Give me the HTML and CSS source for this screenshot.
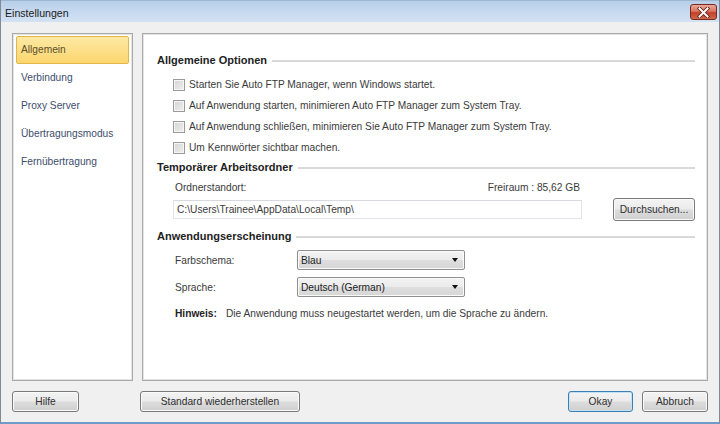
FILE: index.html
```html
<!DOCTYPE html>
<html lang="de">
<head>
<meta charset="utf-8">
<title>Einstellungen</title>
<link rel="stylesheet" href="styles.css">
</head>
<body>
<div class="window">
  <div class="titlebar">
    <span class="title">Einstellungen</span>
    <div class="close">
      <svg width="13" height="11" viewBox="0 0 13 11">
        <path d="M2.5 1.5 L10.5 9.5 M10.5 1.5 L2.5 9.5" stroke="#5a1a10" stroke-width="3.6" stroke-linecap="square" fill="none"/>
        <path d="M2.5 1.5 L10.5 9.5 M10.5 1.5 L2.5 9.5" stroke="#ffffff" stroke-width="2" stroke-linecap="square" fill="none"/>
      </svg>
    </div>
  </div>
  <div class="client">
    <div class="panels">
      <ul class="nav">
        <li class="nav-item selected">Allgemein</li>
        <li class="nav-item">Verbindung</li>
        <li class="nav-item">Proxy Server</li>
        <li class="nav-item">Übertragungsmodus</li>
        <li class="nav-item">Fernübertragung</li>
      </ul>
      <div class="main">
        <div class="group-head"><span>Allgemeine Optionen</span><i class="rule"></i></div>
        <div class="checks">
          <label class="check"><span class="box"></span>Starten Sie Auto FTP Manager, wenn Windows startet.</label>
          <label class="check"><span class="box"></span>Auf Anwendung starten, minimieren Auto FTP Manager zum System Tray.</label>
          <label class="check"><span class="box"></span>Auf Anwendung schließen, minimieren Sie Auto FTP Manager zum System Tray.</label>
          <label class="check"><span class="box"></span>Um Kennwörter sichtbar machen.</label>
        </div>

        <div class="group-head head-temp"><span>Temporärer Arbeitsordner</span><i class="rule"></i></div>
        <div class="folder">
          <div class="folder-labels"><span>Ordnerstandort:</span><span>Freiraum : 85,62 GB</span></div>
          <div class="folder-row">
            <div class="textbox">C:\Users\Trainee\AppData\Local\Temp\</div>
            <div class="btn btn-browse">Durchsuchen...</div>
          </div>
        </div>

        <div class="group-head head-app"><span>Anwendungserscheinung</span><i class="rule"></i></div>
        <div class="form-row first">
          <span class="form-label">Farbschema:</span>
          <div class="select"><span>Blau</span><i class="arrow"></i></div>
        </div>
        <div class="form-row">
          <span class="form-label">Sprache:</span>
          <div class="select"><span>Deutsch (German)</span><i class="arrow"></i></div>
        </div>
        <div class="note"><b>Hinweis:</b><span>Die Anwendung muss neugestartet werden, um die Sprache zu ändern.</span></div>
      </div>
    </div>
    <div class="footer">
      <div class="btn btn-help">Hilfe</div>
      <div class="btn btn-reset">Standard wiederherstellen</div>
      <div class="spacer"></div>
      <div class="btn btn-ok">Okay</div>
      <div class="btn btn-cancel">Abbruch</div>
    </div>
  </div>
</div>
</body>
</html>
```
FILE: styles.css
```css
* { box-sizing: border-box; }
html, body { margin: 0; padding: 0; }
body {
  width: 720px;
  height: 424px;
  overflow: hidden;
  font-family: "Liberation Sans", Arial, sans-serif;
  font-size: 10.2px;
  color: #3a3a3a;
  background: #f0f0f0;
}
.window {
  width: 720px;
  height: 424px;
  display: flex;
  flex-direction: column;
  background: #f0f0f0;
  border-left: 1px solid #7f8a98;
  border-right: 1px solid #7f8a98;
  border-bottom: 2px solid #6f9cc8;
}
.titlebar {
  height: 22px;
  flex: none;
  display: flex;
  align-items: center;
  justify-content: space-between;
  padding: 0 2px 0 4px;
  background: linear-gradient(#b8cfea, #c9dbf0 60%, #d3e2f3);
  border-top: 1px solid #9fb5d0;
}
.title {
  font-size: 10.6px;
  color: #1b1b1b;
  margin-top: 2px;
}
.close {
  width: 27px;
  height: 16px;
  margin-top: 1px;
  border: 1px solid #7a2a1c;
  border-radius: 3px;
  background: linear-gradient(#e8a898, #d9765f 45%, #c2402a 55%, #cf6a4c);
  display: flex;
  align-items: center;
  justify-content: center;
}
.close svg { display: block; }
.client {
  flex: 1;
  display: flex;
  flex-direction: column;
  padding: 11px 11px 0 11px;
}
.panels {
  height: 348px;
  display: flex;
  gap: 9px;
}
.nav {
  width: 121px;
  margin: 0;
  padding: 2px 3px;
  list-style: none;
  background: #fff;
  border: 1px solid #a9a9a9;
  box-shadow: inset 0 0 0 1px #e4e4e4;
}
.nav-item {
  height: 28px;
  line-height: 26px;
  padding-left: 4px;
  border: 1px solid transparent;
  color: #3d4d6d;
}
.nav-item.selected {
  background: linear-gradient(#fde9a3, #fcd66f);
  border-color: #e3b64c;
  border-radius: 2px;
  color: #5a4e2c;
}
.main {
  flex: 1;
  background: #fff;
  border: 1px solid #a9a9a9;
  box-shadow: inset 0 0 0 1px #e4e4e4;
  padding: 18px 12px 0 14px;
}
.group-head {
  height: 16px;
  display: flex;
  align-items: center;
  font-weight: bold;
  font-size: 11px;
  color: #222;
}
.group-head .rule {
  flex: 1;
  height: 2px;
  margin-left: 5px;
  margin-top: 1px;
  background: #d9d9d9;
}
.checks {
  margin-top: 6px;
  padding-left: 16px;
  display: flex;
  flex-direction: column;
}
.check {
  height: 21px;
  display: flex;
  align-items: center;
  color: #3a3a3a;
}
.box {
  width: 12px;
  height: 12px;
  margin-right: 4px;
  border: 1px solid #9a9a9a;
  background: linear-gradient(135deg, #d4d4d4, #efefef);
  box-shadow: inset 0 0 0 1px #f6f6f6;
}
.head-temp { margin-top: 1px; }
.folder {
  padding-left: 16px;
  margin-top: 6px;
}
.folder-labels {
  width: 409px;
  display: flex;
  justify-content: space-between;
  padding: 0 2px 0 2px;
  line-height: 14px;
}
.folder-row {
  margin-top: 3px;
  display: flex;
  align-items: center;
  gap: 31px;
}
.textbox {
  width: 409px;
  height: 19px;
  line-height: 17px;
  padding-left: 3px;
  border: 1px solid #e2e3ea;
  border-top-color: #d8d9e0;
  background: #fff;
  color: #3a3a3a;
}
.btn {
  height: 21px;
  display: flex;
  align-items: center;
  justify-content: center;
  border: 1px solid #7a7a7a;
  border-radius: 3px;
  background: linear-gradient(#f3f3f3, #ebebeb 49%, #dddddd 51%, #cfcfcf);
  box-shadow: inset 0 0 0 1px #fafafa;
  color: #2e2e2e;
}
.btn-browse {
  width: 82px;
  height: 23px;
}
.head-app { margin-top: 7px; }
.form-row {
  display: flex;
  align-items: center;
  height: 20px;
  margin-top: 7px;
  padding-left: 18px;
}
.form-row.first { margin-top: 6px; }
.form-label { width: 122px; }
.select {
  width: 168px;
  height: 20px;
  display: flex;
  align-items: center;
  justify-content: space-between;
  padding: 0 6px 0 3px;
  border: 1px solid #8e8f8f;
  border-radius: 2px;
  background: linear-gradient(#f3f3f3, #ebebeb 49%, #dedede 51%, #d6d6d6);
  box-shadow: inset 0 0 0 1px #fbfbfb;
  color: #222;
}
.arrow {
  width: 0;
  height: 0;
  border-left: 3.5px solid transparent;
  border-right: 3.5px solid transparent;
  border-top: 4px solid #111;
}
.note {
  margin-top: 10px;
  padding-left: 18px;
  line-height: 14px;
  display: flex;
  gap: 9px;
}
.note b { color: #222; }
.footer {
  margin-top: 10px;
  display: flex;
  align-items: center;
}
.btn-help { width: 67px; }
.btn-reset { width: 160px; margin-left: 61px; }
.spacer { flex: 1; }
.btn-ok {
  width: 65px;
  margin-right: 9px;
  border-color: #3c7fb1;
  box-shadow: inset 0 0 0 1px #c4e2f5;
}
.btn-cancel { width: 66px; }
```
